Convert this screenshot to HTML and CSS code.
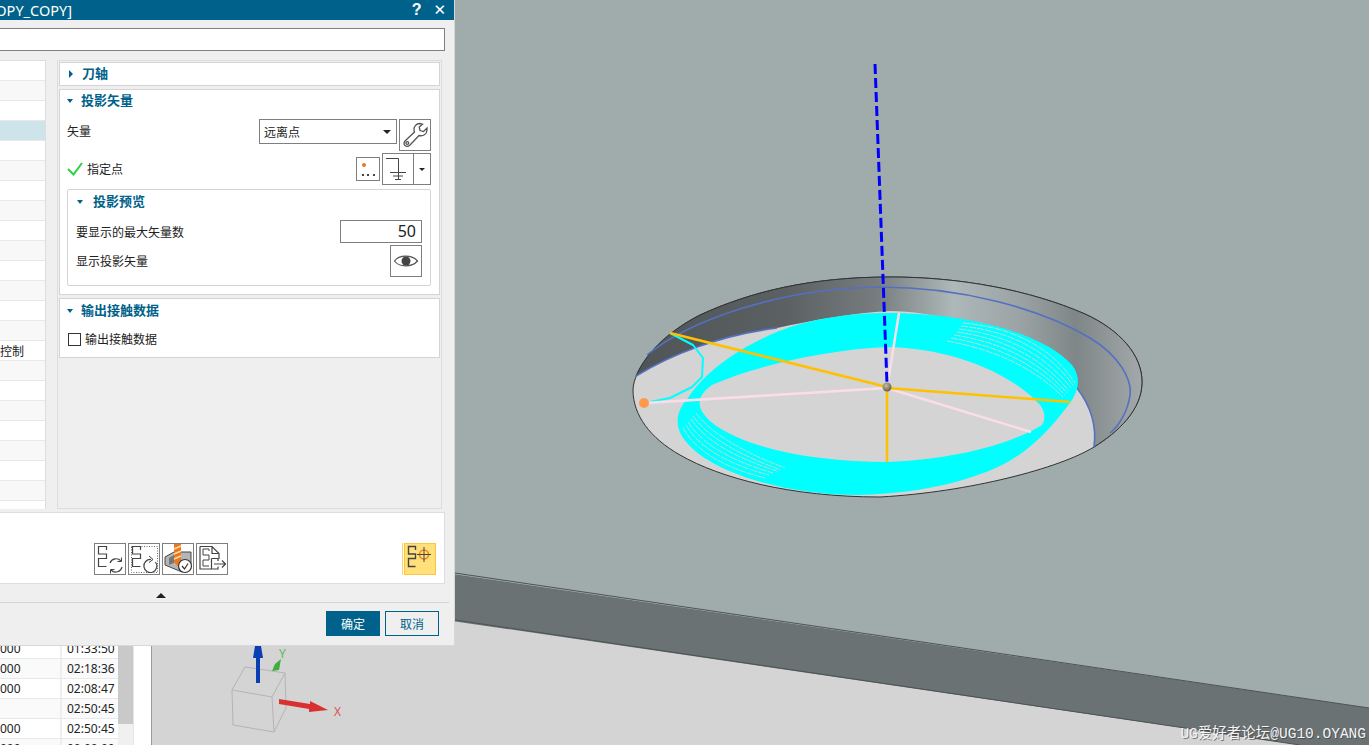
FILE: index.html
```html
<!DOCTYPE html>
<html lang="en">

<head>
  <meta charset="UTF-8" />
  <title>投影矢量</title>
  <meta name="viewport" content="width=device-width, initial-scale=1.0" />
  <link rel="stylesheet" href="styles.css">
</head>

<body>

  <!-- job list behind the dialog -->
  <aside class="sidebar">
    <div class="job-table">
      <div class="job-row"><span class="job-a">000</span><span class="job-b">01:33:50</span></div>
      <div class="job-row alt"><span class="job-a">000</span><span class="job-b">02:18:36</span></div>
      <div class="job-row"><span class="job-a">000</span><span class="job-b">02:08:47</span></div>
      <div class="job-row alt"><span class="job-a"></span><span class="job-b">02:50:45</span></div>
      <div class="job-row"><span class="job-a">000</span><span class="job-b">02:50:45</span></div>
      <div class="job-row alt"><span class="job-a">000</span><span class="job-b">00:00:00</span></div>
    </div>
    <div class="job-scroll"><div class="job-thumb"></div></div>
    <div class="job-gap"></div>
  </aside>

  <main class="viewport">
    <svg class="scene" width="1217" height="745" viewBox="152 0 1217 745">
      <defs>
        <linearGradient id="wallGrad" gradientUnits="userSpaceOnUse" x1="632" y1="0" x2="1142" y2="0">
          <stop offset="0" stop-color="#4f5456" />
          <stop offset="0.3" stop-color="#5b6062" />
          <stop offset="0.48" stop-color="#777d7f" />
          <stop offset="0.63" stop-color="#aeb8b9" />
          <stop offset="0.76" stop-color="#9ba3a5" />
          <stop offset="0.87" stop-color="#7f8688" />
          <stop offset="1" stop-color="#a3a9aa" />
        </linearGradient>
        <radialGradient id="ballGrad" cx="0.4" cy="0.35" r="0.7">
          <stop offset="0" stop-color="#c9bf9d" />
          <stop offset="1" stop-color="#5f5a48" />
        </radialGradient>
      </defs>

      <!-- block faces -->
      <rect x="152" y="0" width="1217" height="745" fill="#d4d4d4" />
      <polygon points="152,0 1369,0 1369,708 152,530" fill="#a0abac" />
      <polygon points="152,530 1369,708 1369,745 1300,745 152,577" fill="#6a7273" />
      <polyline points="455,573 1369,708" fill="none" stroke="#4d5354" />
      <polyline points="455,620 1300,745" fill="none" stroke="#4d5354" />

      <!-- pocket -->
      <path fill="#d4d4d4" stroke="#333" stroke-width="1"
        d="M633 390C633 370 660 335 700 315C750 292 810 277 890 277C960 277 1030 290 1085 314C1120 330 1142 355 1142 382C1142 410 1118 432 1094 447C1060 468 970 492 880 497C790 497 720 478 680 455C650 438 633 415 633 390Z" />
      <path fill="url(#wallGrad)"
        d="M636 376C645 355 665 333 700 315C750 292 810 277 890 277C960 277 1030 290 1085 314C1120 330 1142 355 1142 382C1142 410 1118 432 1094 447C1098 425 1090 405 1075 385C1040 345 960 312 890 311C850 313 810 321 777 328C720 335 670 355 636 376Z" />
      <path fill="none" stroke="#333" stroke-width="1"
        d="M636 376C645 355 665 333 700 315C750 292 810 277 890 277C960 277 1030 290 1085 314C1120 330 1142 355 1142 382C1142 410 1118 432 1094 447" />
      <path fill="none" stroke="#5470c0" stroke-width="1.6"
        d="M647 355C690 320 780 288 880 287C960 287 1040 308 1090 338C1120 356 1132 380 1130 395C1128 410 1120 425 1110 433" />
      <path fill="none" stroke="#5470c0" stroke-width="1.6" d="M636 376C670 355 720 335 777 328" />
      <path fill="none" stroke="#5470c0" stroke-width="1.6" d="M1077 388C1090 405 1097 425 1094 447" />

      <!-- toolpath band -->
      <path fill="#00ffff" fill-rule="evenodd"
        d="M887 313C960 313 1040 330 1072 365C1082 378 1078 392 1070 403C1045 436 1020 462 975 476C940 488 900 494 857 495C790 495 720 475 692 448C672 430 675 412 688 398C705 372 740 345 790 327C820 318 850 313 887 313ZM887 347C950 348 1010 372 1040 405C1046 413 1045 420 1042 425C1010 445 950 460 887 462C820 462 750 450 715 425C695 410 695 397 712 385C750 368 820 350 887 347Z" />
      <g fill="none" stroke="#d4d4d4" stroke-width="0.9" stroke-dasharray="7 1">
        <path d="M683 428Q702 462 765 478" />
        <path d="M686 425Q705 458 769 475" />
        <path d="M688 422Q708 454 773 473" />
        <path d="M691 419Q711 450 777 471" />
        <path d="M693 416Q714 446 781 470" />
        <path d="M696 413Q717 442 785 468" />
        <path d="M963 323Q1040 330 1075 383" />
        <path d="M961 326Q1036 334 1073 385" />
        <path d="M959 329Q1032 338 1071 388" />
        <path d="M957 332Q1029 342 1069 391" />
        <path d="M954 335Q1026 346 1067 393" />
        <path d="M951 338Q1023 350 1065 395" />
        <path d="M947 341Q1020 354 1063 397" />
      </g>
      <polyline fill="none" stroke="#00ffff" stroke-width="2" stroke-linejoin="round"
        points="670,333 693,345 703,358 702,377 692,387 670,398 650,402" />

      <!-- projection vectors -->
      <g stroke="#fbdde9" stroke-width="2.5">
        <line x1="645" y1="403" x2="887" y2="388" />
        <line x1="887" y1="388" x2="1031" y2="432" />
        <line x1="887" y1="388" x2="899" y2="313" />
      </g>
      <g stroke="#ffc000" stroke-width="2.5">
        <line x1="670" y1="333" x2="887" y2="387" />
        <line x1="887" y1="388" x2="1070" y2="402" />
        <line x1="887" y1="387" x2="887" y2="462" />
      </g>
      <line x1="875" y1="64" x2="887" y2="384" stroke="#0000ff" stroke-width="3" stroke-dasharray="10 4" />
      <circle cx="644" cy="403" r="5" fill="#ff9a4a" />
      <circle cx="887" cy="387" r="4.5" fill="url(#ballGrad)" />

      <!-- triad -->
      <g fill="none" stroke="#b4b4b4" stroke-width="1">
        <polygon points="245,667 285,673 272,697 232,690" />
        <polyline points="232,690 233,725 274,732 272,697" />
        <polyline points="274,732 286,708 285,673" />
      </g>
      <polygon points="256,683 256,658 253,658 255,646 261,646 263,658 260,658 260,683" fill="#0a3fb4" />
      <polygon points="272,671 275,664 281,659 279,670" fill="#3fae3f" />
      <polygon points="279,699 310,704 310,701 328,710 309,712 309,709 279,704" fill="#d93030" />
      <text class="axis-y" x="279" y="658">Y</text>
      <text class="axis-x" x="334" y="716">X</text>
    </svg>
  </main>

  <div class="dialog">
    <div class="title-bar">
      <div class="title-text"><span>COPY_COPY]</span></div>
      <div class="title-btns"><span class="title-help">?</span><span class="title-close">✕</span></div>
    </div>

    <div class="dialog-body">
      <div class="name-input"></div>

      <div class="columns">
        <div class="op-list">
          <div class="op-row"></div>
          <div class="op-row"></div>
          <div class="op-row"></div>
          <div class="op-row selected"></div>
          <div class="op-row"></div>
          <div class="op-row"></div>
          <div class="op-row"></div>
          <div class="op-row"></div>
          <div class="op-row"></div>
          <div class="op-row"></div>
          <div class="op-row"></div>
          <div class="op-row"></div>
          <div class="op-row"></div>
          <div class="op-row"></div>
          <div class="op-row">控制</div>
          <div class="op-row"></div>
          <div class="op-row"></div>
          <div class="op-row"></div>
          <div class="op-row"></div>
          <div class="op-row"></div>
          <div class="op-row"></div>
          <div class="op-row"></div>
          <div class="op-row"></div>
        </div>

        <div class="settings">
          <section class="group group-closed">
            <h3 class="group-title title-raised"><span class="tri-right"></span>刀轴</h3>
          </section>

          <section class="group group-vector">
            <h3 class="group-title title-raised"><span class="tri-down"></span>投影矢量</h3>

            <div class="field field-vector">
              <label>矢量</label>
              <div class="combo"><span>远离点</span><span class="tri-small"></span></div>
              <button class="icon-btn btn-wrench">
                <svg width="30" height="30" viewBox="1 1 30 30" fill="none" stroke="#555" stroke-width="1.3">
                  <path d="M21 4.5C17 4.5 14.5 8 15 11.5L15.5 13L6 22C4.2 24 5 26.5 7 27.2C8.5 27.8 10 27 11 26L20 16.5C24 17.5 27.8 15.5 28 11L28 9L24.5 12.5L21 11.5L20.2 8L23.5 5.2Z" />
                  <circle cx="8.3" cy="24" r="1.4" />
                </svg>
              </button>
            </div>

            <div class="field field-point">
              <svg class="check" width="16" height="14" viewBox="0 0 16 14" fill="none" stroke="#2bd13f" stroke-width="2">
                <path d="M1 7L6.5 12.5L15 1" />
              </svg>
              <label>指定点</label>
              <button class="icon-btn btn-point">
                <svg width="22" height="22" viewBox="1 1 22 22">
                  <circle cx="8" cy="8" r="2" fill="#e8791e" />
                  <rect x="6" y="17" width="2" height="2" fill="#444" />
                  <rect x="11" y="17" width="2" height="2" fill="#444" />
                  <rect x="17" y="17" width="2" height="2" fill="#444" />
                </svg>
              </button>
              <div class="split-btn">
                <svg width="30" height="30" viewBox="1 1 30 30" fill="none" stroke="#444" stroke-width="1">
                  <path d="M4 5.5H16.5V27M8 19.5H24M11 23H21M13 26.5H19" />
                </svg>
                <span class="split-arrow"><span class="tri-small"></span></span>
              </div>
            </div>

            <section class="subgroup">
              <h3 class="group-title"><span class="tri-down"></span>投影预览</h3>
              <div class="field field-count">
                <label>要显示的最大矢量数</label>
                <div class="num-input">50</div>
              </div>
              <div class="field field-eye">
                <label>显示投影矢量</label>
                <button class="icon-btn btn-eye">
                  <svg width="30" height="30" viewBox="1 1 30 30">
                    <path d="M4.5 16C9 9.5 22 9.5 27.5 16C22 22.5 9 22.5 4.5 16Z" fill="none" stroke="#555" stroke-width="1.2" />
                    <circle cx="16" cy="16" r="4.5" fill="#444" />
                  </svg>
                </button>
              </div>
            </section>
          </section>

          <section class="group group-output">
            <h3 class="group-title"><span class="tri-down"></span>输出接触数据</h3>
            <div class="field field-check">
              <span class="checkbox"></span>
              <label>输出接触数据</label>
            </div>
          </section>
        </div>
      </div>

      <div class="actions">
        <button class="icon-btn tool-btn">
          <svg width="30" height="30" viewBox="1 1 30 30" fill="none" stroke="#444" stroke-width="1.2">
            <path d="M12.5 7V3.5H4.5V11H12.5V15.5H4.5V23.5H12.5" />
            <path d="M16 20A6.5 6.5 0 0 1 27 18M28 24A6.5 6.5 0 0 1 17 27" />
            <path d="M27.5 14.5V18.5H23.5M16.5 30.5V26.5H20.5" stroke-width="1" />
          </svg>
        </button>
        <button class="icon-btn tool-btn">
          <svg width="30" height="30" viewBox="1 1 30 30" fill="none" stroke="#444" stroke-width="1.2">
            <rect x="3.5" y="3.5" width="26" height="26" stroke="#666" stroke-width="1" stroke-dasharray="1 1.5" />
            <path d="M12.5 7V3.5H4.5V11H12.5V15.5H4.5V23.5H12.5" />
            <path d="M27.5 19A6.5 6.5 0 1 1 23 16.5" />
            <path d="M21 13L25 16.5L21 19.5" stroke-width="1" />
          </svg>
        </button>
        <button class="icon-btn tool-btn">
          <svg width="30" height="30" viewBox="1 1 30 30">
            <polygon points="3,14 12,9 29,9 29,24 20,29 3,22" fill="#b5b5b5" stroke="#444" stroke-width="1" />
            <polygon points="7,15 12,12 12,20 7,22" fill="#777" />
            <polygon points="12,1 19,1 19,19 15.5,23 12,19" fill="#e8791e" />
            <path d="M12 6L19 3M12 11L19 8M12 16L19 13" stroke="#ffd9a8" stroke-width="1.5" />
            <circle cx="23" cy="23" r="6.5" fill="#fff" stroke="#333" stroke-width="1.2" />
            <path d="M20 23L22.5 26L26 20.5" fill="none" stroke="#333" stroke-width="1.2" />
          </svg>
        </button>
        <button class="icon-btn tool-btn">
          <svg width="30" height="30" viewBox="1 1 30 30" fill="none" stroke="#444" stroke-width="1.2">
            <path d="M4 3.5H16L23 10.5V16M16 3.5V10.5H23M15 26H4V3.5" />
            <path d="M13 8V6H7V12H13V17H7V23H13" stroke-width="1" />
            <path d="M15.5 15.5H22V18M22 23.5V26H15.5V15.5M18 21H29M26 17.5L29.5 21L26 24.5" />
          </svg>
        </button>
        <div class="tool-stripe"></div>
        <button class="tool-active">
          <svg width="30" height="30" viewBox="1 1 30 30" fill="none" stroke="#444" stroke-width="1.4">
            <path d="M11.5 7V3.5H4.5V11H11.5V15.5H4.5V23.5H11.5" />
            <circle cx="20" cy="11.5" r="4.5" stroke="#ef8a1f" stroke-width="1.6" />
            <path d="M13 11.5H27M20 4V19" stroke-width="1" />
          </svg>
        </button>
      </div>

      <div class="collapse-row"><span class="tri-up"></span></div>
    </div>

    <div class="footer">
      <button class="btn btn-ok">确定</button>
      <button class="btn btn-cancel">取消</button>
    </div>
  </div>

  <div class="watermark">UG爱好者论坛@UG10.OYANG</div>

</body>

</html>
```

FILE: styles.css
```css
* {
  margin: 0;
  padding: 0;
  box-sizing: border-box;
  font-family: "Noto Sans", "Noto Sans CJK SC", sans-serif;
}

body {
  width: 1369px;
  height: 745px;
  overflow: hidden;
  display: flex;
  background: #d4d4d4;
  color: #222;
  font-size: 12px;
}

button {
  background: #fff;
  cursor: pointer;
}

h3 {
  font-size: 13px;
}

/* job list */
.sidebar {
  width: 152px;
  height: 745px;
  display: flex;
  align-items: flex-end;
  background: #fff;
  border-right: 1px solid #999;
}

.job-table {
  width: 118px;
  height: 106px;
  overflow: hidden;
}

.job-row {
  height: 20px;
  display: flex;
  align-items: center;
  line-height: 19px;
  background: #fff;
  border-bottom: 1px solid #e8e8e8;
}

.job-row.alt {
  background: #fafafa;
}

.job-a {
  width: 62px;
  height: 100%;
  border-right: 2px solid #eee;
  color: #222;
}

.job-b {
  padding-left: 5px;
}

.job-scroll {
  width: 15px;
  height: 106px;
  background: #f0f0f0;
}

.job-thumb {
  height: 85px;
  background: #c9c9c9;
}

.job-gap {
  flex: 1;
  height: 106px;
  border-left: 1px solid #e6e6e6;
}

/* 3d view */
.viewport {
  flex: 1;
  height: 745px;
  overflow: hidden;
}

.scene {
  display: block;
}

.axis-y {
  font-size: 12px;
  fill: #5cb85c;
}

.axis-x {
  font-size: 12px;
  fill: #e05050;
}

/* dialog */
.dialog {
  position: absolute;
  top: 0;
  left: 0;
  width: 455px;
  height: 646px;
  display: flex;
  flex-direction: column;
  background: #efefef;
  border-right: 1px solid #d8d8d8;
  border-bottom: 1px solid #d8d8d8;
}

.title-bar {
  height: 20px;
  flex-shrink: 0;
  display: flex;
  justify-content: space-between;
  align-items: center;
  background: #00628a;
  color: #fff;
}

.title-text {
  width: 72px;
  display: flex;
  justify-content: flex-end;
  overflow: hidden;
  white-space: nowrap;
  font-size: 14.5px;
  line-height: 18px;
}

.title-btns {
  display: flex;
  align-items: center;
  gap: 12px;
  padding-right: 8px;
}

.title-help {
  font-size: 16px;
  font-weight: 700;
  font-family: "Liberation Sans", sans-serif;
}

.title-close {
  font-size: 15px;
  font-family: "DejaVu Sans", sans-serif;
}

.dialog-body {
  display: flex;
  flex-direction: column;
  padding: 8px 9px 0 0;
}

.name-input {
  height: 23px;
  background: #fff;
  border: 1px solid #7f7f7f;
  border-left: none;
}

.columns {
  display: flex;
  gap: 11px;
  margin-top: 9px;
  height: 449px;
}

.op-list {
  width: 46px;
  height: 449px;
  overflow: hidden;
  background: #fff;
  border-right: 1px solid #ddd;
  border-top: 1px solid #ddd;
}

.op-row {
  height: 20px;
  line-height: 21px;
  font-size: 12px;
  background: #fff;
  border-bottom: 1px solid #e8e8e8;
}

.op-row:nth-child(even) {
  background: #f8f8f8;
}

.op-row.selected {
  background: #cde5ea;
}

.settings {
  width: 385px;
  height: 449px;
  padding: 1px;
  background: #efefef;
  border: 1px solid #ddd;
}

.group {
  background: #fff;
  border: 1px solid #d4d4d4;
  margin-bottom: 3px;
}

.group-closed {
  height: 24px;
}

.group-vector {
  height: 206px;
  padding: 0 8px 0 7px;
}

.group-output {
  height: 60px;
}

.group-title {
  display: flex;
  align-items: center;
  height: 23px;
  padding-left: 7px;
  color: #00628a;
  font-weight: 700;
  line-height: 23px;
}

.title-raised {
  padding-bottom: 2px;
}

.group-vector > .group-title {
  margin-left: -7px;
}

.tri-right {
  width: 0;
  height: 0;
  margin: 0 9px 0 2px;
  border-left: 4px solid #00628a;
  border-top: 4px solid transparent;
  border-bottom: 4px solid transparent;
}

.tri-down {
  width: 0;
  height: 0;
  margin-right: 8px;
  border-top: 4px solid #00628a;
  border-left: 3.5px solid transparent;
  border-right: 3.5px solid transparent;
}

.tri-small {
  width: 0;
  height: 0;
  border-top: 4px solid #222;
  border-left: 4px solid transparent;
  border-right: 4px solid transparent;
}

.tri-up {
  width: 0;
  height: 0;
  border-bottom: 5px solid #222;
  border-left: 5px solid transparent;
  border-right: 5px solid transparent;
}

.field {
  display: flex;
  align-items: center;
}

.field-vector {
  height: 32px;
  margin-top: 6px;
  align-items: flex-start;
}

.field-vector label {
  flex: 1;
  line-height: 25px;
}

.combo {
  width: 138px;
  height: 25px;
  display: flex;
  align-items: center;
  justify-content: space-between;
  padding: 0 5px 0 4px;
  background: #fff;
  border: 1px solid #7f7f7f;
}

.icon-btn {
  display: flex;
  align-items: center;
  justify-content: center;
  border: 1px solid #7f7f7f;
  background: #fff;
}

.btn-wrench {
  width: 32px;
  height: 32px;
  margin-left: 2px;
}

.field-point {
  height: 32px;
  margin-top: 2px;
}

.check {
  margin-right: 4px;
}

.field-point label {
  flex: 1;
}

.btn-point {
  width: 24px;
  height: 24px;
}

.split-btn {
  width: 49px;
  height: 32px;
  margin-left: 2px;
  display: flex;
  align-items: center;
  border: 1px solid #7f7f7f;
  background: #fff;
}

.split-arrow {
  flex: 1;
  height: 100%;
  display: flex;
  align-items: center;
  justify-content: center;
  border-left: 1px solid #7f7f7f;
}

.split-arrow .tri-small {
  border-top-width: 3px;
  border-left-width: 3px;
  border-right-width: 3px;
}

.subgroup {
  height: 97px;
  margin-top: 4px;
  padding: 0 8px;
  border: 1px solid #d4d4d4;
  border-radius: 2px;
}

.subgroup .group-title {
  margin-left: -8px;
  padding-left: 8px;
}

.subgroup .tri-down {
  margin-right: 10px;
}

.subgroup .group-title {
  padding-left: 9px;
}

.field-count {
  height: 23px;
  margin-top: 7px;
  justify-content: space-between;
}

.num-input {
  width: 82px;
  height: 23px;
  padding-right: 5px;
  background: #fff;
  border: 1px solid #7f7f7f;
  text-align: right;
  font-size: 16px;
  line-height: 21px;
}

.field-eye {
  height: 32px;
  margin-top: 2px;
  justify-content: space-between;
}

.btn-eye {
  width: 32px;
  height: 32px;
}

.field-check {
  margin: 8px 0 0 8px;
}

.checkbox {
  width: 13px;
  height: 13px;
  margin-right: 4px;
  background: #fff;
  border: 1px solid #333;
}

.actions {
  height: 72px;
  margin-top: 3px;
  display: flex;
  align-items: flex-start;
  padding: 30px 8px 0 94px;
  gap: 2px;
  background: #fff;
  border: 1px solid #ddd;
  border-left: none;
}

.tool-btn {
  width: 32px;
  height: 32px;
}

.tool-stripe {
  width: 1px;
  height: 32px;
  margin-left: auto;
  margin-right: -1px;
  background: #ffd75a;
}

.tool-active {
  width: 32px;
  height: 32px;
  display: flex;
  align-items: center;
  justify-content: center;
  background: #ffe07a;
  border: 1px solid #fcc640;
}

.collapse-row {
  height: 19px;
  margin-right: -4px;
  display: flex;
  align-items: center;
  justify-content: center;
  padding: 4px 128px 0 0;
  border-bottom: 1px solid #d4d4d4;
}

.footer {
  display: flex;
  justify-content: flex-end;
  gap: 5px;
  padding: 8px 15px 0 0;
}

.btn {
  width: 54px;
  height: 25px;
  font-size: 12px;
  border: 1px solid #00628a;
}

.btn-ok {
  background: #00628a;
  color: #fff;
}

.btn-cancel {
  background: #efefef;
  color: #00628a;
}

/* forum stamp in the picture corner */
.watermark {
  position: absolute;
  right: 3px;
  bottom: 3px;
  font-family: "Liberation Mono", "Noto Sans CJK SC", monospace;
  font-size: 14.5px;
  line-height: 16px;
  color: #f4f4f4;
  text-shadow: 1px 1px 0 rgba(60, 60, 60, 0.6);
}
```
